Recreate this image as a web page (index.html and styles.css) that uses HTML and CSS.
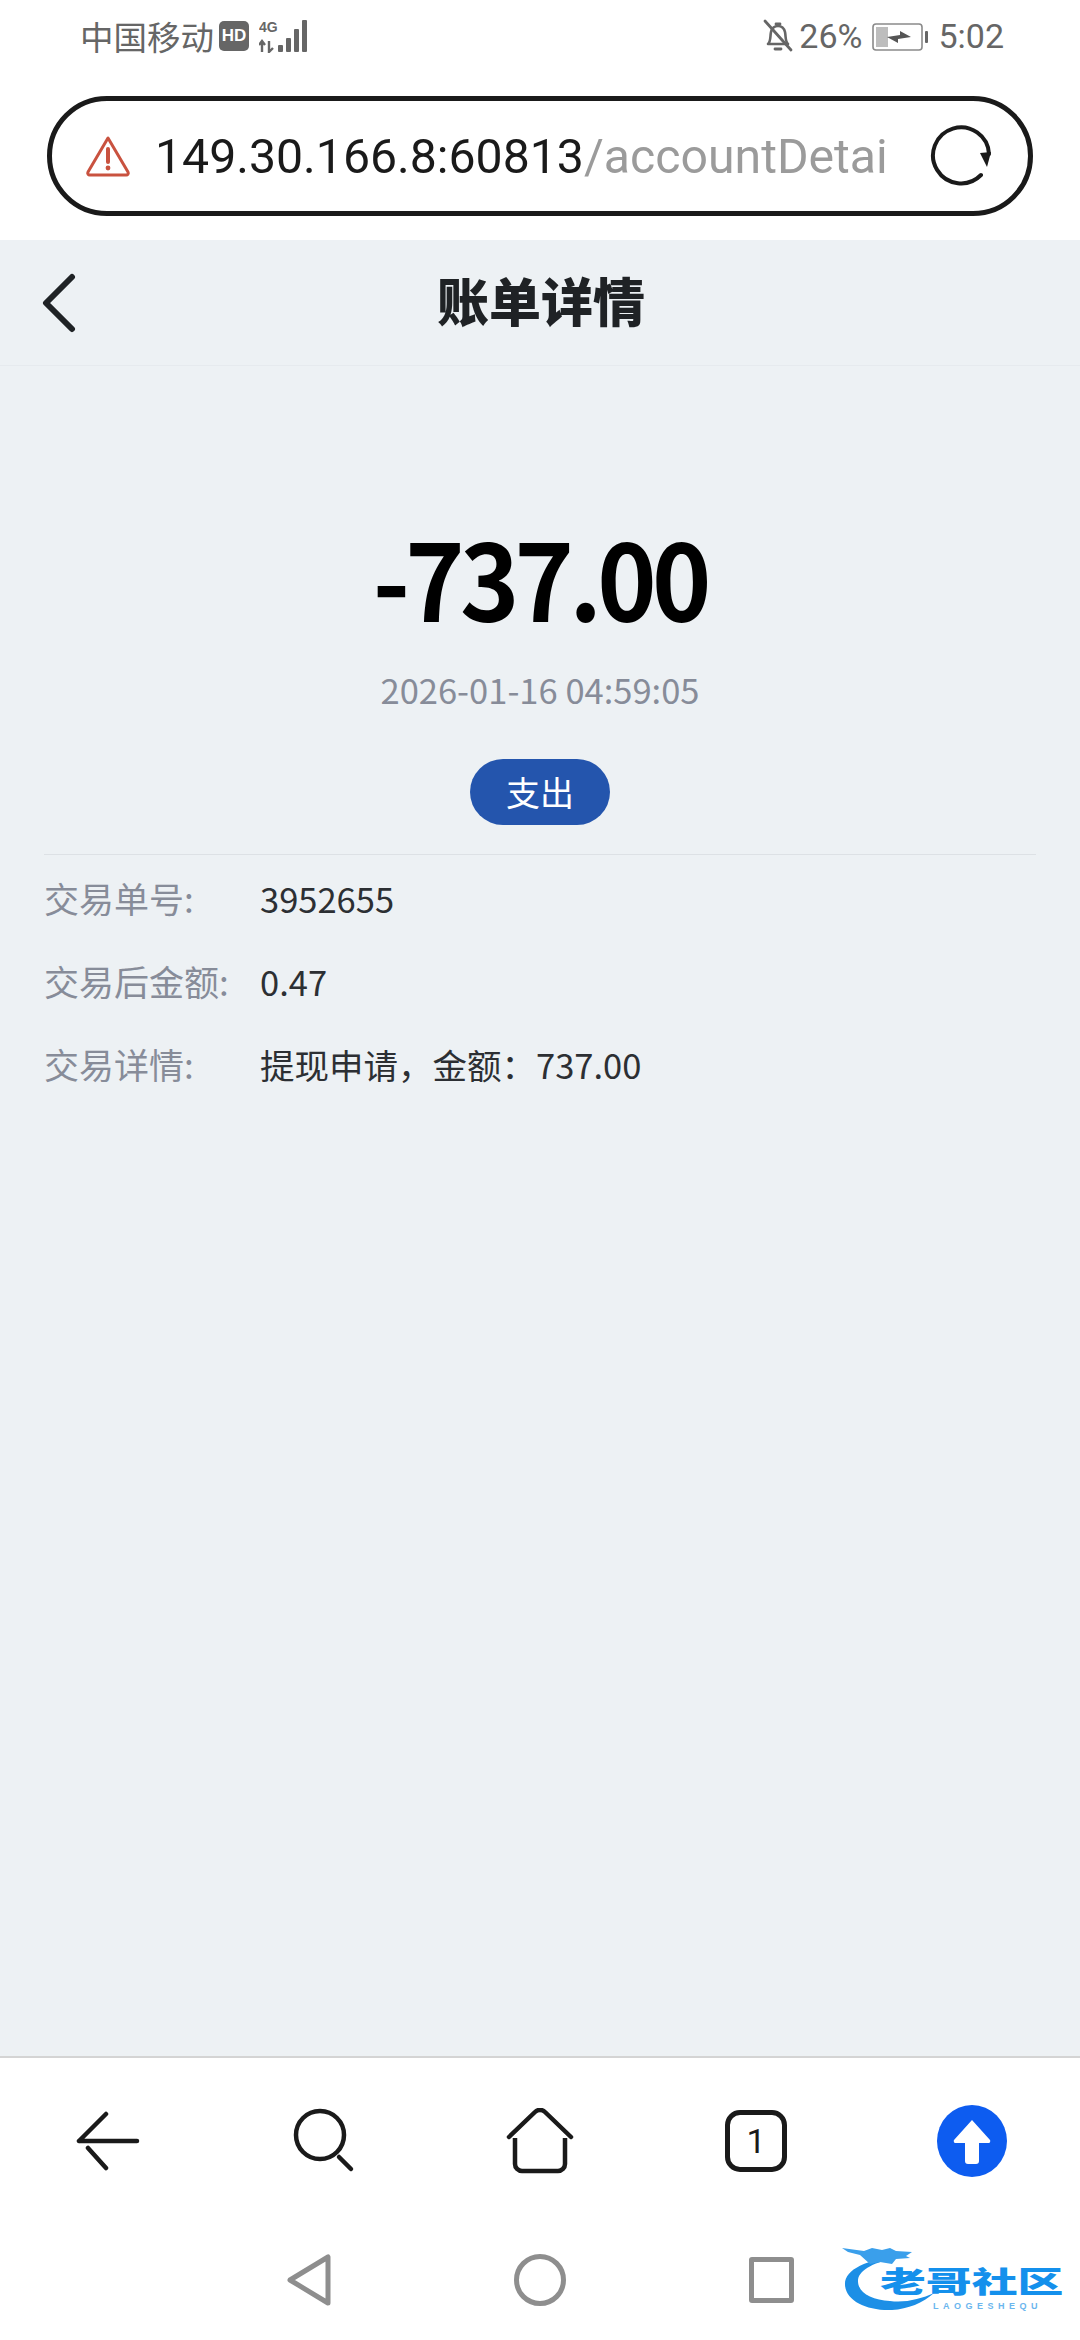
FILE: index.html
```html
<!DOCTYPE html>
<html lang="zh-CN">
<head>
  <meta charset="UTF-8" />
  <meta name="viewport" content="width=device-width, initial-scale=1.0"/>
  <title>账单详情</title>
  <link rel="stylesheet" href="styles.css">
</head>
<body>
  <div class="screen">
    <div class="status-bar">
      <div class="status-left">
        <span class="carrier">中国移动</span>
        <span class="hd-badge">HD</span>
        <svg class="signal" width="54" height="34" viewBox="0 0 54 34">
          <text x="0" y="13" class="signal-text">4G</text>
          <path d="M3 33V22M0 26l3-4 3 4M10 22v11l4-4" fill="none" stroke="#666" stroke-width="2.4"/>
          <rect x="19" y="26" width="5" height="7" rx="1" fill="#666"/>
          <rect x="27" y="19" width="5" height="14" rx="1" fill="#666"/>
          <rect x="35" y="10" width="5" height="23" rx="1" fill="#666"/>
          <rect x="43" y="1" width="5" height="32" rx="1" fill="#666"/>
        </svg>
      </div>
      <div class="status-right">
        <svg width="30" height="34" viewBox="0 0 30 34">
          <path d="M5 25c3-3 2-7 3-12 1-4 4-6 7-6s6 2 7 6c1 5 0 9 3 12z" fill="none" stroke="#666" stroke-width="2.6" stroke-linejoin="round"/>
          <path d="M12 30h6M13 5h4M2 2l26 29" fill="none" stroke="#666" stroke-width="2.8" stroke-linecap="round"/>
        </svg>
        <span class="battery-pct">26%</span>
        <svg class="battery" width="56" height="30" viewBox="0 0 56 30">
          <rect x="1" y="3" width="49" height="26" rx="3" fill="none" stroke="#8a8a8a" stroke-width="1.6"/>
          <rect x="4" y="6" width="12" height="20" fill="#bdbdbd"/>
          <path d="M15 16l13-2v-4l11 6-13 2v4z" fill="#555"/>
          <rect x="53" y="10" width="3" height="12" rx="1" fill="#666"/>
        </svg>
        <span class="clock">5:02</span>
      </div>
    </div>

    <div class="url-wrap">
      <div class="url-bar">
        <svg class="warn-icon" width="46" height="42" viewBox="0 0 46 42">
          <path d="M23 3L3 37a2 2 0 0 0 2 3h36a2 2 0 0 0 2-3z" fill="none" stroke="#c9523f" stroke-width="3" stroke-linejoin="round"/>
          <path d="M23 14v13" stroke="#c9523f" stroke-width="4" stroke-linecap="round"/>
          <circle cx="23" cy="33" r="2.4" fill="#c9523f"/>
        </svg>
        <span class="url-text">149.30.166.8:60813<span class="url-path">/accountDetai</span></span>
        <svg class="reload-icon" width="62" height="62" viewBox="0 0 62 62">
          <path d="M51 50A28 28 0 1 1 59 29" fill="none" stroke="#1a1a1a" stroke-width="4" stroke-linecap="round"/>
          <path d="M50 28l11-1-4 15z" fill="#1a1a1a"/>
        </svg>
      </div>
    </div>

    <div class="nav-bar">
      <svg class="nav-back" width="36" height="60" viewBox="0 0 36 60">
        <path d="M31 4L5 30l26 26" fill="none" stroke="#1f2225" stroke-width="6" stroke-linecap="round" stroke-linejoin="round"/>
      </svg>
      <h1 class="nav-title">账单详情</h1>
    </div>

    <main class="content">
      <div class="summary">
        <div class="amount">-737.00</div>
        <div class="date">2026-01-16 04:59:05</div>
        <span class="type-badge">支出</span>
      </div>
      <div class="detail-list">
        <div class="detail-row">
          <span class="detail-label">交易单号:</span>
          <span class="detail-value">3952655</span>
        </div>
        <div class="detail-row">
          <span class="detail-label">交易后金额:</span>
          <span class="detail-value">0.47</span>
        </div>
        <div class="detail-row">
          <span class="detail-label">交易详情:</span>
          <span class="detail-value">提现申请，金额：737.00</span>
        </div>
      </div>
    </main>

    <div class="toolbar">
      <svg width="64" height="60" viewBox="0 0 64 60">
        <path d="M3 30h58M3 30L30 3M12 37l18 20" fill="none" stroke="#1a1a1a" stroke-width="4.5" stroke-linecap="round"/>
      </svg>
      <svg width="64" height="66" viewBox="0 0 64 66">
        <circle cx="28" cy="27" r="24" fill="none" stroke="#1a1a1a" stroke-width="4.5"/>
        <path d="M47 49l12 12" stroke="#1a1a1a" stroke-width="4.5" stroke-linecap="round"/>
      </svg>
      <svg width="68" height="66" viewBox="0 0 68 66">
        <path d="M3 29L29 4a7 7 0 0 1 10 0l26 25" fill="none" stroke="#1a1a1a" stroke-width="4.5" stroke-linecap="round"/>
        <path d="M9 30v26a7 7 0 0 0 7 7h36a7 7 0 0 0 7-7V30" fill="none" stroke="#1a1a1a" stroke-width="4.5"/>
      </svg>
      <div class="tab-count">1</div>
      <svg width="70" height="72" viewBox="0 0 70 72">
        <ellipse cx="35" cy="36" rx="35" ry="36" fill="#0d5cf0"/>
        <path d="M35 15L17 35a2 2 0 0 0 2 3h9v18a3 3 0 0 0 3 3h8a3 3 0 0 0 3-3V38h9a2 2 0 0 0 2-3z" fill="#fff"/>
      </svg>
    </div>

    <div class="system-nav">
      <svg width="44" height="52" viewBox="0 0 44 52">
        <path d="M3 26L41 3v46z" fill="none" stroke="#8e8e8e" stroke-width="5" stroke-linejoin="round"/>
      </svg>
      <svg width="52" height="52" viewBox="0 0 52 52">
        <circle cx="26" cy="26" r="23.5" fill="none" stroke="#8e8e8e" stroke-width="5"/>
      </svg>
      <div class="sys-square"></div>
    </div>

    <div class="watermark">
      <svg class="watermark-dragon" width="100" height="70" viewBox="0 0 100 70">
        <path d="M58 12C24 14 2 25 3 40c1 16 22 26 47 25 16-1 31-7 42-17-13 6-29 10-44 8-18-1-32-8-32-20 0-10 14-18 34-22z" fill="#1c8fe6"/>
        <path d="M0 3l22 3 8-3 10 2 8-2 6 3 16 1-6 4 4 2-14 1-4 5-12-2-10 2-10-9-12-3z" fill="#3a9feb"/>
      </svg>
      <div class="watermark-name">老哥社区</div>
      <div class="watermark-sub">LAOGESHEQU</div>
    </div>
  </div>
</body>
</html>
```

FILE: styles.css
```css
* {
  box-sizing: border-box;
}
body {
  margin: 0;
  background-color: #fff;
  font-family: "Noto Sans CJK SC", "Noto Sans", sans-serif;
}
.screen {
  position: relative;
  display: flex;
  flex-direction: column;
  width: 1080px;
  height: 2340px;
  overflow: hidden;
}

/* status bar */
.status-bar {
  display: flex;
  justify-content: space-between;
  align-items: center;
  height: 72px;
  padding: 0 76px 0 80px;
  color: #666;
}
.status-left, .status-right {
  display: flex;
  align-items: center;
}
.carrier {
  font-size: 33.5px;
  line-height: 1;
}
.hd-badge {
  width: 30px;
  height: 30px;
  margin-left: 5px;
  background-color: #666;
  border-radius: 5px;
  color: #fff;
  font-family: "Liberation Sans", sans-serif;
  font-size: 17px;
  font-weight: bold;
  line-height: 30px;
  text-align: center;
}
.signal {
  margin-left: 10px;
}
.signal-text {
  font-family: "Liberation Sans", sans-serif;
  font-size: 14px;
  font-weight: bold;
  fill: #666;
}
.battery-pct, .clock {
  font-family: Roboto, sans-serif;
  font-size: 34px;
  line-height: 1;
}
.battery-pct {
  margin-left: 6px;
}
.battery {
  margin-left: 10px;
}
.clock {
  margin-left: 10px;
}

/* address bar */
.url-wrap {
  height: 168px;
  padding: 24px 47px 0;
}
.url-bar {
  display: flex;
  align-items: center;
  height: 120px;
  padding: 0 36px 0 33px;
  border: 5px solid #1a1a1a;
  border-radius: 60px;
}
.url-text {
  flex: 1;
  margin-left: 24px;
  color: #1a1a1a;
  font-family: Roboto, sans-serif;
  font-size: 48.2px;
  white-space: nowrap;
}
.url-path {
  color: #9b9b9b;
}

/* page header */
.nav-bar {
  position: relative;
  display: flex;
  justify-content: center;
  align-items: center;
  height: 126px;
  padding: 0 0 6px 2px;
  background-color: #edf1f4;
  border-bottom: 1px solid #e6eaee;
}
.nav-back {
  position: absolute;
  left: 41px;
  top: 33px;
}
.nav-title {
  margin: 0;
  color: #1f2225;
  font-size: 52px;
  font-weight: 900;
}

/* content */
.content {
  flex: 1;
  padding: 0 44px;
  background-color: #edf1f4;
}
.summary {
  display: flex;
  flex-direction: column;
  align-items: center;
  height: 489px;
  border-bottom: 1px solid #dde1e5;
}
.amount {
  margin-top: 157px;
  color: #000;
  font-size: 106px;
  font-weight: bold;
  line-height: 1;
  letter-spacing: -5px;
  transform: scaleX(0.95);
}
.date {
  margin-top: 43px;
  color: #878c99;
  font-size: 34.5px;
  line-height: 1;
}
.type-badge {
  width: 140px;
  height: 66px;
  margin-top: 52px;
  background-color: #2455ad;
  border-radius: 33px;
  color: #fff;
  font-size: 34px;
  line-height: 66px;
  text-align: center;
}
.detail-list {
  padding-top: 1px;
}
.detail-row {
  display: flex;
  align-items: center;
  height: 83px;
}
.detail-label {
  width: 216px;
  color: #878c99;
  font-size: 35px;
}
.detail-value {
  color: #2c2f33;
  font-size: 34.5px;
}

/* browser toolbar */
.toolbar {
  display: grid;
  grid-template-columns: repeat(5, 216px);
  justify-items: center;
  align-items: center;
  height: 164px;
  padding-top: 4px;
  background-color: #fff;
  border-top: 2px solid #d4d4d4;
}
.tab-count {
  width: 62px;
  height: 62px;
  border: 5px solid #1a1a1a;
  border-radius: 15px;
  color: #1a1a1a;
  font-family: Roboto, sans-serif;
  font-size: 34px;
  line-height: 52px;
  text-align: center;
}

/* android nav */
.system-nav {
  display: grid;
  grid-template-columns: repeat(3, 231px);
  justify-content: center;
  justify-items: center;
  align-items: center;
  height: 120px;
}
.sys-square {
  width: 45px;
  height: 46px;
  border: 5px solid #8e8e8e;
  border-radius: 3px;
}

/* forum watermark sits over the corner */
.watermark {
  position: absolute;
  left: 842px;
  top: 2245px;
  width: 225px;
  height: 78px;
}
.watermark-dragon {
  position: absolute;
  left: 0;
  top: 0;
}
.watermark-name {
  position: absolute;
  left: 38px;
  top: 21px;
  color: #1490ec;
  font-size: 29px;
  font-weight: 900;
  line-height: 29px;
  white-space: nowrap;
  transform: scaleX(1.58);
  transform-origin: left top;
}
.watermark-sub {
  position: absolute;
  left: 91px;
  top: 57px;
  color: #6bb6ee;
  font-family: "Liberation Sans", sans-serif;
  font-size: 9px;
  font-weight: bold;
  letter-spacing: 4.5px;
  line-height: 1;
  white-space: nowrap;
}
```
